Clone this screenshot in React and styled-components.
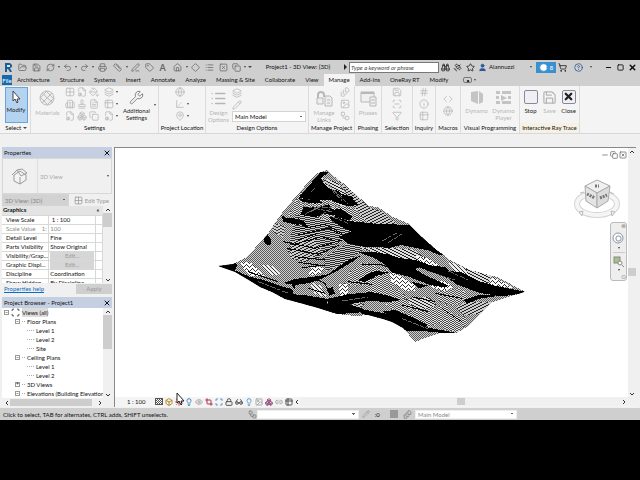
import React, { useState } from "react";
import styled, { createGlobalStyle } from "styled-components";
import {
  FolderOpen, Save, RefreshCw, Undo2, Redo2, Printer, Ruler, PenLine, Tag,
  House, Diamond, List, Layers, SquareX, Copy, Binoculars, Satellite, Star,
  User, ShoppingCart, HelpCircle, Clock, Minus, Square, X, Wrench, Globe,
  Boxes, FileCog, FileText, PaintBucket, Stamp, Table2, Grid2x2, MapPin, Axis3d,
  Image, FileStack, ScanLine, Filter, Pencil, Hash, Info, Code, Link2,
  Building2, Scan, Eye, Sun, Glasses, Lightbulb, Crop, Lock, Box, Workflow,
} from "lucide-react";

const qatIcons = [
  { icon: FolderOpen, w: 12 }, { icon: Save, w: 13 }, { icon: RefreshCw, w: 12, drop: true },
  { icon: Undo2, w: 12, drop: true }, { icon: Redo2, w: 12, drop: true },
  { icon: Printer, w: 14 }, { icon: Ruler, w: 14, drop: true }, { icon: PenLine, w: 12 },
  { icon: Tag, w: 12 }, { letter: "A", w: 12 }, { icon: House, w: 14, drop: true },
  { icon: Diamond, w: 12 }, { icon: List, w: 13 }, { icon: SquareX, w: 12 },
  { icon: Copy, w: 12, drop: true },
];

const tabs = [
  "Architecture", "Structure", "Systems", "Insert", "Annotate", "Analyze",
  "Massing & Site", "Collaborate", "View", "Manage", "Add-Ins", "OneRay RT", "Modify",
];

const properties = [
  ["View Scale", " 1 : 100"],
  ["Scale Value    1:", "100", "dim"],
  ["Detail Level", "Fine"],
  ["Parts Visibility", "Show Original"],
  ["Visibility/Grap...", "Edit...", "button"],
  ["Graphic Displ...", "Edit...", "button"],
  ["Discipline", "Coordination"],
  ["Show Hidden", "By Discipline"],
];

const tree = [
  { level: 1, text: "Floor Plans", box: "−" },
  { level: 2, text: "Level 1" },
  { level: 2, text: "Level 2" },
  { level: 2, text: "Site" },
  { level: 1, text: "Ceiling Plans", box: "−" },
  { level: 2, text: "Level 1" },
  { level: 2, text: "Level 2" },
  { level: 1, text: "3D Views", box: "+" },
  { level: 1, text: "Elevations (Building Elevation", box: "−" },
];

const viewTools = [
  [Box, "#b08d2c"], [Sun, "#c33"], [Lightbulb, "#3a8ac0"], [Eye, "#aaa"],
  [Crop, "#a34"], [Scan, "#357fbd"], [Lock, "#555"], [Glasses, "#555"], [Lightbulb, "#5a9fd0"],
  [Image, "#aaa"], [Boxes, "#94507d"], [Link2, "#aaa"], [Table2, "#555"],
];

// contour hatches: one pixel per column, repeated every `period` rows
const hatches = [
  { id: "fine", offsets: [0, 1], period: 2, paper: "#d0d0d0", ink: "#5c5c5c" },
  { id: "wave", offsets: [0, 0, 1, 1, 0, 1], period: 2, paper: "#e4e4e4", ink: "#4c4c4c" },
  { id: "flat", offsets: [0, 0, 0, 0, 0, 1, 1, 1, 1, 1], period: 2, paper: "#ccc", ink: "#2c2c2c" },
  { id: "zig", offsets: [0, 0, 1, 1, 2, 2, 1, 1], period: 3, paper: "#ccc", ink: "#333" },
  { id: "down", offsets: [0, 0, 1, 1, 2, 2], period: 3, paper: "#ddd", ink: "#222" },
  { id: "up", offsets: [2, 2, 1, 1, 0, 0], period: 3, paper: "#ccc", ink: "#222" },
  { id: "steep", offsets: [0, 1, 2, 3], period: 4, paper: "#eee", ink: "#333" },
  { id: "open", offsets: [0, 1, 2, 3, 2, 1], period: 4, paper: "#fff", ink: "#333" },
];

const outline =
  "218,266 233,264 245,258 255,248 267,235 275,223 282,213 292,201 300,192 309,181 317,173 327,170 335,177 343,183 353,192 361,199 368,206 378,207 393,217 410,224 423,238 437,250 450,260 470,270 497,277 526,292 508,297 493,302 485,309 477,318 467,327 457,333 440,333 428,337 415,342 403,328 392,322 383,319 368,315 355,316 337,314 318,308 300,303 285,299 272,292 260,287 247,279 235,272";

const patches = [
  ["flat", "296,214 330,216 352,226 345,238 318,258 300,260 288,252 292,232"],
  ["wave", "300,192 322,197 350,208 368,211 364,222 330,222 310,214 288,216"],
  ["down", "322,178 337,182 351,200 340,207 331,197"],
  ["zig", "336,178 348,188 362,200 368,207 352,200"],
  ["up", "343,184 353,193 370,208 382,212 397,224 369,224 350,203"],
  ["zig", "272,222 286,227 283,237 273,232"],
  ["open", "240,261 252,263 264,276 250,276 243,268"],
  ["steep", "258,264 272,266 280,274 270,276"],
  ["up", "292,242 312,236 322,250 306,262 290,258"],
  ["open", "312,266 325,268 320,274 308,276"],
  ["flat", "323,258 350,242 365,248 345,263 326,271"],
  ["steep", "310,282 321,286 327,298 315,294"],
  ["open", "339,284 348,283 348,294 340,296"],
  ["wave", "351,270 368,263 382,269 379,279 358,286 344,284"],
  ["wave", "361,263 390,271 400,284 384,290 364,285"],
  ["open", "390,272 402,277 415,285 415,291 404,291 391,281"],
  ["down", "360,248 385,248 412,249 430,261 423,268 404,260"],
  ["open", "416,256 427,258 440,265 434,267 420,262"],
  ["steep", "447,260 468,270 477,277 457,275"],
  ["down", "466,269 492,276 487,284 471,281"],
  ["open", "493,277 507,284 513,288 502,287 488,284"],
  ["open", "430,280 445,281 454,287 444,291 431,287"],
  ["wave", "436,292 460,288 470,297 455,306 440,302"],
  ["up", "466,302 492,302 479,314 464,315 456,308"],
  ["down", "404,299 428,297 436,305 423,311 405,307"],
  ["wave", "385,304 405,299 414,308 399,314"],
  ["wave", "410,311 447,305 454,318 428,327 406,319"],
  ["wave", "365,286 400,290 407,298 384,302 365,296"],
  ["zig", "330,302 350,299 364,304 357,312 336,309"],
  ["wave", "440,317 463,315 469,323 457,332 443,329"],
];

// where contours run together into solid black, drawn at three times the scale
const shadows = [
  "318,20 340,22 318,40 330,60 345,72 372,78 378,92 420,118 396,116 370,102 348,99 342,78 318,88 300,105 250,99 262,85 285,58",
  "285,58 330,56 342,80 378,92 412,100 430,120 400,124 372,116 345,104 300,108 262,96",
  "375,85 412,96 418,104 388,98",
  "250,100 300,106 325,112 300,116 262,110",
  "265,124 300,128 342,118 350,132 395,141 365,151 330,147 300,156 255,150 262,138",
  "345,137 376,130 412,155 402,166 362,155",
  "340,158 362,155 402,168 480,176 585,180 620,215 655,248 690,272 672,270 640,256 560,240 525,248 450,246 400,236 372,215 408,200 380,186",
  "198,150 212,158 238,160 268,171 250,180 230,176 205,170",
  "155,203 168,225 166,242 150,236 146,222",
  "250,160 268,170 282,190 262,182",
  "8,302 32,292 68,296 60,316 100,334 150,346 205,366 232,372 236,388 280,392 338,402 336,416 385,412 440,430 430,445 365,446 290,430 220,410 150,378 90,348",
  "205,354 240,342 290,336 340,328 370,305 404,283 438,272 412,290 362,320 322,340 285,354 240,360",
  "230,355 242,355 240,372 234,370",
  "425,260 470,260 520,268 590,290 630,300 600,312 630,330 700,362 690,368 640,358 580,335 530,322 512,300 480,280",
  "560,282 600,284 650,302 690,306 704,318 740,322 790,348 840,362 928,380 905,388 860,394 800,385 762,372 724,358 700,340 650,322 610,306",
  "430,346 452,330 480,318 522,322 482,334 450,352",
  "335,402 400,388 470,381 520,392 560,405 520,411 460,408 400,418 384,426 340,416",
  "430,430 480,440 560,455 640,488 720,503 712,508 650,500 560,496 520,470 440,446",
  "500,440 540,435 600,460 640,480 620,488 560,465",
  "745,405 792,390 852,392 790,402 758,416",
  "335,372 352,366 360,385 344,392",
  "588,350 640,362 612,370",
];

// single contours that stay visible over the hatching
const ridges =
  "M205 230L300 250 380 225M215 250L310 268 372 240M240 275L330 285M250 292L310 300M240 195L330 178 380 205M250 210L340 190 390 215M230 240L320 215 372 232M250 225L310 205M262 308L330 300M295 340L330 355 345 392M440 300L500 300 560 320M400 350L470 358M590 395L660 410M660 385L740 400M680 430L740 470M560 420L640 440M100 320L190 350M280 370L330 385";

const highlights =
  "M248 110L330 128 400 122M260 122L350 140M285 140L350 112M270 148L330 116M318 150L370 118M325 45L372 100M330 42L382 108M342 62L398 116M352 155L400 176M500 228L545 205M520 232L560 208M290 80L300 70M640 320L720 345M700 318L760 345M560 460L640 492M380 408L460 396M130 350L220 385";

function Hatch({ id, offsets, period, paper, ink }) {
  return (
    <pattern id={id} width={offsets.length} height={period} patternUnits="userSpaceOnUse">
      <rect width={offsets.length} height={period} fill={paper} />
      {offsets.map((y, x) => (
        <rect key={x} x={x} y={y} width="1" height="1" fill={ink} />
      ))}
    </pattern>
  );
}

function Terrain() {
  return (
    <svg width="312" height="176" viewBox="216 168 312 176" shapeRendering="crispEdges" role="img" aria-label="Toposurface">
      <defs>
        {hatches.map((h) => <Hatch key={h.id} {...h} />)}
        <clipPath id="ground"><polygon points={outline} /></clipPath>
      </defs>
      <polygon points={outline} fill="url(#fine)" />
      <g clipPath="url(#ground)">
        {patches.map(([fill, points], i) => <polygon key={i} points={points} fill={`url(#${fill})`} />)}
        <g transform="translate(215 165) scale(0.3333)">
          {shadows.map((points, i) => <polygon key={i} points={points} />)}
          <path d={ridges} fill="none" stroke="#000" strokeWidth="3" />
          <path d={highlights} fill="none" stroke="#999" strokeWidth="2" strokeDasharray="18 3 12 5" />
        </g>
      </g>
    </svg>
  );
}

function ViewCube() {
  return (
    <CubeSvg width="48" height="42" viewBox="573 178 48 42" role="img" aria-label="View cube">
      <ellipse cx="597" cy="204" rx="20" ry="11" fill="none" stroke="#d4d4d4" strokeWidth="6" />
      <ellipse cx="597" cy="204" rx="20" ry="11" fill="none" stroke="#f5f5f5" strokeWidth="4" />
      <path d="M585 186l12-6 13 6-13 7z" fill="#f0f0f0" stroke="#aaa" />
      <path d="M585 186l12 7v15l-11-7z" fill="#e4e4e4" stroke="#aaa" />
      <path d="M610 186l-13 7v15l11-7z" fill="#dcdcdc" stroke="#aaa" />
      <path d="M587 194l8 4M600 198l7-3M595 186l4 0" stroke="#777" strokeWidth="3" strokeDasharray="2 1" />
      <path d="M579 212l4-1-1 5zM615 212l-4-1 1 5zM580 193l4-1M610 192l4 2" stroke="#bbb" fill="#eee" />
    </CubeSvg>
  );
}

function MaterialsIcon() {
  return (
    <svg width="17" height="17" viewBox="0 0 17 17" fill="none" stroke="#bbb">
      <circle cx="8" cy="8" r="7" fill="#eee" />
      <path d="M3 3l11 10M2 8l7 7M7 1l8 8M13 3L3 13M8 1L1 8M15 8l-7 7" />
    </svg>
  );
}

function LinksIcon() {
  return (
    <svg width="17" height="17" viewBox="0 0 17 17" fill="#eee" stroke="#b8b8b8">
      <path d="M2 8V5a3 3 0 016 0v2" fill="none" strokeWidth="2" />
      <path d="M1 8h6v6H1zM9 6h5l2 2v8H9zM11 10h3M11 13h3" />
    </svg>
  );
}

function PhasesIcon() {
  return (
    <svg width="17" height="17" viewBox="0 0 17 17" fill="#f0f0f0" stroke="#b8b8b8">
      <path d="M1 2h13v10H1z" />
      <path d="M1 3h13" strokeWidth="2" />
      <path d="M10 7h6v9h-6zM11 10h4M11 13h4" />
    </svg>
  );
}

function DynamoIcon({ player }) {
  return (
    <svg width="17" height="15" viewBox="0 0 17 15" fill="#c4c4c4">
      {player ? (
        <path d="M1 1h4v3H1zM7 1h9v3H7zM1 6h3v3H1zM6 5l6 3-6 3zM13 6h3v3h-3zM1 11h4v3H1zM7 11h9v3H7z" />
      ) : (
        <path d="M3 2l7-1v13l-7-3zM11 1l4 3v8l-4 2z" />
      )}
    </svg>
  );
}

function Chevron({ dir = "down" }) {
  const d = { down: "M1 3l2 2 2-2", up: "M1 4l2-2 2 2", right: "M2 1l2 2-2 2", left: "M4 1L2 3l2 2" };
  return (
    <svg width="6" height="6" viewBox="0 0 6 6" fill="none" stroke="#333" aria-hidden="true"><path d={d[dir]} /></svg>
  );
}

function Icons({ items }) {
  return items.map((Icon, i) => <Icon key={i} size={10} strokeWidth={2} />);
}

function Panel({ title, w, children, tint }) {
  return (
    <RibbonPanel $w={w}>
      <PanelTools>{children}</PanelTools>
      <PanelTitle $tint={tint}>{title}</PanelTitle>
    </RibbonPanel>
  );
}

export default function App() {
  const [tab, setTab] = useState("Manage");
  return (
    <>
      <GlobalStyle />
      <Screen>
        <TitleBar>
          <Logo width="11" height="11" viewBox="0 0 11 11" role="img" aria-label="Revit">
            <path d="M2 1h5l2 2v2L7 6l2 4H7L5 7H4v3H2z" fill="#1b5c96" />
            <path d="M4 3h3v2H4z" fill="#d8e6f2" />
          </Logo>
          <QuickAccess>
            {qatIcons.map(({ icon: Icon, letter, w, drop }, i) => (
              <React.Fragment key={i}>
                <ToolButton $w={w} aria-label="Quick access">
                  {letter ? <b>{letter}</b> : <Icon size={9} />}
                </ToolButton>
                {drop && <Caret />}
              </React.Fragment>
            ))}
            <Caret $wide />
          </QuickAccess>
          <Title>Project1 - 3D View: {"{3D}"}</Title>
          <Caret $right />
          <Search placeholder="Type a keyword or phrase" aria-label="Search" />
          <Account>
            <Binoculars size={9} />
            <Satellite size={9} />
            <Star size={9} />
            <User size={9} color="#2b5797" fill="#2b5797" />
          </Account>
          <UserName>Alannuzzi</UserName>
          <Caret />
          <Trial><Clock size={9} fill="#fff" color="#3a8fd0" />8</Trial>
          <Help>
            <ShoppingCart size={9} />
            <HelpCircle size={9} color="#24539b" />
            <Caret />
          </Help>
          <WindowButtons>
            <ToolButton $w={12} aria-label="Minimize"><Minus size={7} strokeWidth={4} /></ToolButton>
            <ToolButton $w={12} aria-label="Maximize"><Square size={7} strokeWidth={3} /></ToolButton>
            <ToolButton $w={12} aria-label="Close"><X size={9} strokeWidth={4} /></ToolButton>
          </WindowButtons>
        </TitleBar>

        <Tabs>
          <FileTab>File</FileTab>
          {tabs.map((t) => (
            <Tab key={t} $active={t === tab} onClick={() => setTab(t)}>{t}</Tab>
          ))}
          <TabToggle aria-label="Collapse ribbon">•</TabToggle>
          <Caret />
        </Tabs>

        <Ribbon>
          <Panel title={<>Select <Caret $wide /></>} w={29}>
            <BigButton $active $w={23}>
              <svg width="10" height="14" viewBox="0 0 10 14"><path d="M2 1v10l2-2 2 4 1-1-1-3h3z" fill="#fff" stroke="#444" /></svg>
              Modify
            </BigButton>
          </Panel>
          <Panel title="Settings" w={128}>
            <BigButton $dim $w={28}><MaterialsIcon />Materials</BigButton>
            <SmallTools $cols={3}>
              <Icons items={[Grid2x2, FileCog, PaintBucket, Building2, Stamp, FileText, FileCog, Boxes, Copy]} />
            </SmallTools>
            <SmallTools $cols={2}>
              <Layers size={10} /><Caret /><Table2 size={10} /><Caret /><FileCog size={10} /><Caret />
            </SmallTools>
            <BigButton $w={32}><Wrench size={15} strokeWidth={1} color="#444" />Additional Settings</BigButton>
            <Caret />
          </Panel>
          <Panel title="Project Location" w={47}>
            <SmallTools $cols={2}>
              <Globe size={10} /><span /><Axis3d size={10} /><Caret /><MapPin size={10} /><Caret />
            </SmallTools>
          </Panel>
          <Panel title="Design Options" w={103}>
            <BigButton $dim $w={25}><List size={17} strokeWidth={2} />Design Options</BigButton>
            <OptionStack>
              <Layers size={10} />
              <Pencil size={10} />
              <Select aria-label="Active design option" defaultValue="Main Model"><option>Main Model</option></Select>
            </OptionStack>
          </Panel>
          <Panel title="Manage Project" w={46}>
            <BigButton $dim $w={26}><LinksIcon />Manage Links</BigButton>
            <SmallTools $cols={1}><Icons items={[FileStack, Image, Workflow]} /></SmallTools>
          </Panel>
          <Panel title="Phasing" w={27}>
            <BigButton $dim $w={25}><PhasesIcon />Phases</BigButton>
          </Panel>
          <Panel title="Selection" w={31}>
            <SmallTools $cols={1}><Icons items={[Save, ScanLine, Filter]} /></SmallTools>
          </Panel>
          <Panel title="Inquiry" w={23}>
            <SmallTools $cols={1}><Icons items={[Hash, Info, Table2]} /></SmallTools>
          </Panel>
          <Panel title="Macros" w={25}>
            <SmallTools $cols={1} $middle><Icons items={[Code, Globe]} /></SmallTools>
          </Panel>
          <Panel title="Visual Programming" w={59}>
            <BigButton $dim $w={26}><DynamoIcon />Dynamo</BigButton>
            <BigButton $dim $w={26}><DynamoIcon player />Dynamo Player</BigButton>
          </Panel>
          <Panel title="Interactive Ray Trace" w={60} tint>
            <BigButton $w={18}><Frame />Stop</BigButton>
            <BigButton $dim $w={18}><Save size={15} />Save</BigButton>
            <BigButton $w={18}><Frame><X size={11} strokeWidth={5} /></Frame>Close</BigButton>
          </Panel>
        </Ribbon>

        <Workspace>
          <Sidebar>
            <Dock>
              <DockHeader>Properties<CloseButton aria-label="Close properties"><X size={8} strokeWidth={3} /></CloseButton></DockHeader>
              <TypeBox>
                <Thumb>
                  <svg width="18" height="17" viewBox="0 0 18 17" fill="#f4f4f4" stroke="#999"><path d="M3 7v6l6 3 6-4V7L9 3zM1 7l5-5 4 6 6-3-5-4-5 1M9 9v7" /></svg>
                </Thumb>
                <span>3D View</span>
                <Caret />
              </TypeBox>
              <TypeRow>
                <Select $plain aria-label="Instance" defaultValue="3D View: {3D}"><option>3D View: {"{3D}"}</option></Select>
                <EditType><Grid2x2 size={9} />Edit Type</EditType>
              </TypeRow>
              <ScrollArea $h={77}>
                <PropTable>
                  <thead><tr><th colSpan={2}>Graphics</th><th>«</th></tr></thead>
                  <tbody>
                    {properties.map(([name, value, kind]) => (
                      <PropRow key={name} $dim={kind === "dim"}>
                        <td>{name}</td>
                        <td>{kind === "button" ? <EditButton>{value}</EditButton> : value}</td>
                        <td />
                      </PropRow>
                    ))}
                  </tbody>
                </PropTable>
                <VScroll><Chevron dir="up" /><Thumbnail $h={14} /><Chevron /></VScroll>
              </ScrollArea>
              <DockFooter>
                <a href="#help">Properties help</a>
                <Apply>Apply</Apply>
              </DockFooter>
            </Dock>
            <Dock $grow>
              <DockHeader>Project Browser - Project1<CloseButton aria-label="Close browser"><X size={8} strokeWidth={3} /></CloseButton></DockHeader>
              <ScrollArea $grow>
                <Tree>
                  <TreeItem $level={0}><Expander>−</Expander><Scan size={9} /><mark>Views (all)</mark></TreeItem>
                  {tree.map(({ level, text, box }, i) => (
                    <TreeItem key={i} $level={level}>
                      {box ? <Expander>{box}</Expander> : null}<Twig $short={!!box} />{text}
                    </TreeItem>
                  ))}
                </Tree>
                <VScroll><Chevron dir="up" /><Thumbnail $h={34} /><Chevron /></VScroll>
              </ScrollArea>
              <HScroll><Chevron dir="left" /><Thumbnail $w={82} /><Chevron dir="right" /></HScroll>
            </Dock>
          </Sidebar>

          <ViewWindow>
            <ViewBody>
              <Canvas>
                <Terrain />
                <ViewButtons><Minus size={8} /><Copy size={8} /><SquareX size={8} /></ViewButtons>
                <ViewCube />
                <NavBar>
                  <small>⊗</small>
                  <svg width="13" height="13" viewBox="0 0 13 13" fill="none" stroke="#8a94a6"><circle cx="6" cy="6" r="5" fill="#fff" /><rect x="4" y="4" width="5" height="5" rx="2" /></svg>
                  <Caret />
                  <hr />
                  <svg width="11" height="11" viewBox="0 0 11 11" fill="none" stroke="#888"><rect x="1" y="1" width="6" height="6" fill="#a9c08a" /><circle cx="7" cy="7" r="2" fill="#fff" /><path d="M9 9l2 2" /></svg>
                  <Caret />
                  <small>⊙</small>
                </NavBar>
              </Canvas>
              <VScroll $view><Chevron dir="up" /><Gap /><Thumbnail $h={8} /><Gap $short /><Chevron /></VScroll>
            </ViewBody>
            <ViewBar>
              <Scale>1 : 100</Scale>
              <ToolButton $w={11} aria-label="Detail level">
                <svg width="8" height="7" viewBox="0 0 8 7" shapeRendering="crispEdges"><path d="M0 0h8v7H0z" fill="#555" /><path d="M1 1h1v1H1zM3 1h1v1H3zM5 1h1v1H5zM2 2h1v1H2zM4 2h1v1H4zM6 2h1v1H6zM1 3h1v1H1zM3 3h1v1H3zM5 3h1v1H5zM2 4h1v1H2zM4 4h1v1H4zM6 4h1v1H6zM1 5h1v1H1zM3 5h1v1H3zM5 5h1v1H5z" fill="#fff" /></svg>
              </ToolButton>
              {viewTools.map(([Icon, color], i) => (
                <ToolButton key={i} $w={10} aria-label="View control"><Icon size={8} color={color} strokeWidth={3} /></ToolButton>
              ))}
              <Chevron dir="left" />
              <HScroll $view><Gap /><Thumbnail $w={8} /><Gap /><Chevron dir="right" /></HScroll>
            </ViewBar>
            <Pointer width="9" height="14" viewBox="0 0 9 14"><path d="M1 1v10l2-2 2 4 1-1-1-3h3z" fill="#fff" stroke="#222" /></Pointer>
          </ViewWindow>
        </Workspace>

        <StatusBar>
          <Message>Click to select, TAB for alternates, CTRL adds, SHIFT unselects.</Message>
          <Workflow size={9} color="#777" />
          <Select $status aria-label="Workset" defaultValue=""><option value="" /></Select>
          <StatusTools>
            <Pencil size={8} color="#999" /><span>:0</span><Block /><FileStack size={9} color="#777" />
          </StatusTools>
          <Select $status aria-label="Design option" defaultValue="Main Model"><option>Main Model</option></Select>
        </StatusBar>
      </Screen>
    </>
  );
}

const GlobalStyle = createGlobalStyle`
  * { box-sizing: border-box; }
  body { margin: 0; background: #000; }
  body, button, input, select, table {
    font-family: Lato, "Open Sans", sans-serif;
    font-size: 6px;
    line-height: 9px;
    color: #111;
  }
  button { border: 0; padding: 0; background: none; }
  svg { flex: none; }
`;

const Screen = styled.div`
  display: flex;
  flex-direction: column;
  min-height: 100vh;
  padding: 60px 0;
  background: #000;
  overflow: hidden;
`;

const TitleBar = styled.header`
  display: flex;
  align-items: center;
  height: 14px;
  padding-left: 3px;
  background: #cfcfcf;
`;

const Logo = styled.svg`
  margin-right: 2px;
`;

const QuickAccess = styled.div`
  display: flex;
  align-items: center;
  width: 236px;
  justify-content: space-between;
  color: #666;
`;

const ToolButton = styled.button`
  display: flex;
  align-items: center;
  justify-content: center;
  width: ${(p) => p.$w}px;
  color: inherit;
  b { font-size: 9px; }
`;

const Caret = styled.i`
  flex: none;
  display: inline-block;
  width: 0;
  height: 0;
  border: ${(p) => (p.$wide ? 2 : 1)}px solid transparent;
  border-top-color: #444;
  border-top-width: 2px;
  border-bottom: 0;
  vertical-align: middle;
  ${(p) => p.$right && "border: 3px solid transparent; border-left-color: #222; border-right: 0;"}
`;

const Title = styled.div`
  flex: 1;
  padding-bottom: 2px;
  text-align: center;
  white-space: nowrap;
`;

const Search = styled.input`
  width: 90px;
  height: 11px;
  margin: 0 2px;
  padding: 0 1px;
  border: 1px solid #777;
  background: #fff;
  &::placeholder { color: #444; font-style: italic; }
`;

const Account = styled.div`
  display: flex;
  justify-content: space-between;
  width: 46px;
`;

const UserName = styled.span`
  width: 43px;
  padding: 0 0 2px 2px;
`;

const Trial = styled.button`
  display: flex;
  align-items: center;
  justify-content: center;
  gap: 2px;
  width: 20px;
  height: 11px;
  margin-left: 4px;
  background: #3a8fd0;
  color: #fff;
`;

const Help = styled.div`
  display: flex;
  align-items: center;
  justify-content: space-between;
  width: 34px;
  margin: 0 10px 0 2px;
`;

const WindowButtons = styled.div`
  display: flex;
  padding-right: 2px;
`;

const Tabs = styled.nav`
  display: flex;
  align-items: center;
  height: 12px;
  padding-left: 2px;
  background: #cfcfcf;
`;

const Tab = styled.button`
  height: 12px;
  padding: 0 5px 2px;
  white-space: nowrap;
  background: ${(p) => (p.$active ? "#f4f4f4" : "transparent")};
`;

const FileTab = styled.button`
  width: 10px;
  height: 10px;
  overflow: hidden;
  background: #1769ad;
  color: #fff;
`;

const TabToggle = styled.button`
  display: flex;
  align-items: center;
  justify-content: center;
  width: 9px;
  height: 6px;
  margin: 0 2px 0 10px;
  border: 1px solid #777;
  border-radius: 2px;
  line-height: 5px;
`;

const Ribbon = styled.section`
  display: flex;
  height: 48px;
  padding-left: 2px;
  background: #f4f4f4;
  border-bottom: 1px solid #d8d8d8;
`;

const RibbonPanel = styled.div`
  flex: none;
  display: flex;
  flex-direction: column;
  width: ${(p) => p.$w}px;
  border-right: 1px solid #dcdcdc;
`;

const PanelTools = styled.div`
  flex: 1;
  display: flex;
  align-items: center;
  justify-content: center;
  gap: 1px;
`;

const PanelTitle = styled.div`
  height: 10px;
  text-align: center;
  white-space: nowrap;
  background: ${(p) => (p.$tint ? "#f7f1e4" : "transparent")};
`;

const BigButton = styled.button`
  flex: none;
  display: flex;
  flex-direction: column;
  align-items: center;
  justify-content: flex-start;
  width: ${(p) => p.$w}px;
  height: 36px;
  padding-top: 3px;
  line-height: 7px;
  color: ${(p) => (p.$dim ? "#b5b5b5" : "#222")};
  background: ${(p) => (p.$active ? "#b4d3f1" : "transparent")};
  box-shadow: ${(p) => (p.$active ? "inset 0 0 0 1px #6ba3d6" : "none")};
  svg { margin-bottom: 2px; }
`;

const SmallTools = styled.div`
  display: grid;
  grid-template-columns: repeat(${(p) => p.$cols}, auto);
  grid-auto-rows: 12px;
  column-gap: 2px;
  align-items: center;
  align-self: ${(p) => (p.$middle ? "center" : "flex-start")};
  color: #bbb;
  padding: 0 2px;
`;

const OptionStack = styled.div`
  flex: 1;
  display: grid;
  grid-template-rows: 12px 12px 11px;
  align-items: center;
  padding-right: 2px;
  color: #bbb;
`;

const Select = styled.select`
  appearance: none;
  width: 100%;
  height: 11px;
  padding: 0 2px;
  border: 1px solid #d4d4d4;
  border-radius: 0;
  background-color: #fff;
  background-image: linear-gradient(45deg, transparent 50%, #666 50%), linear-gradient(-45deg, transparent 50%, #666 50%);
  background-position: right 4px center, right 2px center;
  background-size: 2px 2px;
  background-repeat: no-repeat;
  ${(p) => p.$plain && "width: 67px; height: 12px; background-color: #d2d2d2; color: #888;"}
  ${(p) => p.$status && "width: 102px; height: 9px; line-height: 7px; color: #888; border-color: #eee;"}
`;

const Frame = styled.span`
  display: flex;
  align-items: center;
  justify-content: center;
  width: 14px;
  height: 14px;
  margin-bottom: 3px;
  border: 1px solid #889;
  border-radius: 2px;
  background: #f0f0f4;
  svg { margin: 0; }
`;

const Workspace = styled.main`
  flex: 1;
  display: flex;
  gap: 2px;
  padding: 13px 4px 1px 2px;
  background: #f0f0f0;
`;

const Sidebar = styled.aside`
  display: flex;
  flex-direction: column;
  gap: 3px;
  width: 110px;
`;

const Dock = styled.section`
  display: flex;
  flex-direction: column;
  flex: ${(p) => (p.$grow ? 1 : "none")};
`;

const DockHeader = styled.h2`
  display: flex;
  justify-content: space-between;
  align-items: center;
  height: 11px;
  margin: 0;
  padding: 0 1px 0 2px;
  font-size: 6px;
  font-weight: 400;
  background: #c4d0e2;
`;

const CloseButton = styled.button`
  display: flex;
`;

const TypeBox = styled.div`
  display: flex;
  align-items: center;
  height: 36px;
  padding-right: 2px;
  border: 1px solid #d8d8d8;
  color: #aaa;
  span { flex: 1; padding-left: 2px; }
`;

const Thumb = styled.div`
  display: flex;
  align-items: center;
  justify-content: center;
  width: 35px;
  height: 34px;
  border-right: 1px solid #ddd;
`;

const TypeRow = styled.div`
  display: flex;
  justify-content: space-between;
  height: 12px;
`;

const EditType = styled.button`
  display: flex;
  align-items: center;
  gap: 2px;
  padding-right: 3px;
  color: #999;
`;

const ScrollArea = styled.div`
  display: flex;
  overflow: hidden;
  background: #fff;
  ${(p) => (p.$grow ? "flex: 1;" : `height: ${p.$h}px;`)}
`;

const PropTable = styled.table`
  flex: 1;
  border-collapse: collapse;
  table-layout: fixed;
  align-self: flex-start;
  width: 100px;
  th {
    height: 9px;
    padding: 0 1px;
    text-align: left;
    line-height: 8px;
    background: #e4e4e4;
  }
  th:last-child { width: 7px; }
`;

const PropRow = styled.tr`
  color: ${(p) => (p.$dim ? "#888" : "#111")};
  td {
    height: 9px;
    padding: 0 0 0 1px;
    border: 1px solid #d8d8d8;
    border-left: 0;
    line-height: 8px;
    white-space: pre;
    overflow: hidden;
  }
  td:first-child { padding-left: 4px; }
`;

const EditButton = styled.button`
  display: block;
  width: 44px;
  height: 8px;
  line-height: 7px;
  background: #d6d6d6;
  color: #999;
`;

const VScroll = styled.div`
  flex: none;
  display: flex;
  flex-direction: column;
  align-items: center;
  width: ${(p) => (p.$view ? 8 : 9)}px;
  padding: 1px 0;
  background: #f0f0f0;
  > svg:last-child { margin-top: auto; }
`;

const HScroll = styled.div`
  display: flex;
  align-items: center;
  height: 9px;
  background: #f0f0f0;
  ${(p) => (p.$view ? "flex: 1; padding-right: 9px;" : "padding: 0 9px 0 2px;")}
  > svg:last-child { margin-left: auto; }
`;

const Thumbnail = styled.i`
  width: ${(p) => (p.$w ? `${p.$w}px` : "100%")};
  height: ${(p) => (p.$h ? `${p.$h}px` : "7px")};
  background: #cdcdcd;
`;

const Gap = styled.i`
  flex: ${(p) => (p.$short ? "0 0 114px" : 1)};
`;

const DockFooter = styled.footer`
  display: flex;
  align-items: center;
  justify-content: space-between;
  height: 11px;
  padding-left: 2px;
  a { color: #0a6cc4; }
`;

const Apply = styled.button`
  width: 36px;
  height: 10px;
  background: #cfcfcf;
  color: #999;
`;

const Tree = styled.ul`
  flex: 1;
  margin: 0;
  padding: 0 0 0 2px;
  list-style: none;
  overflow: hidden;
`;

const TreeItem = styled.li`
  display: flex;
  align-items: center;
  gap: 2px;
  height: 9px;
  padding-left: ${(p) => [0, 11, 23][p.$level]}px;
  white-space: nowrap;
  mark { background: #dcdcdc; color: inherit; }
`;

const Expander = styled.span`
  flex: none;
  width: 5px;
  height: 5px;
  border: 1px solid #999;
  font-size: 5px;
  line-height: 3px;
  text-align: center;
`;

const Twig = styled.i`
  flex: none;
  width: ${(p) => (p.$short ? 3 : 7)}px;
  border-top: 1px dotted #aaa;
`;

const ViewWindow = styled.section`
  position: relative;
  flex: 1;
  display: flex;
  flex-direction: column;
  border: solid #888;
  border-width: 1px 0 0 1px;
  background: #fff;
`;

const ViewBody = styled.div`
  flex: 1;
  display: flex;
`;

const Canvas = styled.div`
  position: relative;
  flex: 1;
  display: flex;
  align-items: center;
  justify-content: center;
  padding-bottom: 34px;
`;

const ViewButtons = styled.div`
  position: absolute;
  top: 3px;
  right: 1px;
  display: flex;
  gap: 1px;
  color: #555;
`;

const CubeSvg = styled.svg`
  position: absolute;
  top: 30px;
  right: 7px;
`;

const NavBar = styled.div`
  position: absolute;
  top: 74px;
  right: 1px;
  display: flex;
  flex-direction: column;
  align-items: center;
  justify-content: space-between;
  width: 17px;
  height: 59px;
  border: 1px solid #bbb;
  border-radius: 3px;
  background: #eee;
  hr { width: 12px; margin: 0; border: 0; border-top: 1px solid #ccc; }
  small { align-self: flex-end; font-size: 6px; line-height: 6px; color: #888; }
`;

const ViewBar = styled.div`
  display: flex;
  align-items: center;
  height: 10px;
  padding-bottom: 1px;
  background: #f4f4f4;
`;

const Scale = styled.span`
  width: 38px;
  padding-left: 12px;
  white-space: nowrap;
`;

const Pointer = styled.svg`
  position: absolute;
  left: 61px;
  bottom: 1px;
`;

const StatusBar = styled.footer`
  display: flex;
  align-items: center;
  height: 12px;
  padding-left: 3px;
  background: #cfcfcf;
`;

const Message = styled.span`
  width: 245px;
  white-space: nowrap;
`;

const StatusTools = styled.div`
  display: flex;
  align-items: center;
  justify-content: space-between;
  width: 56px;
  padding: 0 3px;
`;

const Block = styled.i`
  width: 8px;
  height: 8px;
  margin-left: 6px;
  background: #999;
`;
